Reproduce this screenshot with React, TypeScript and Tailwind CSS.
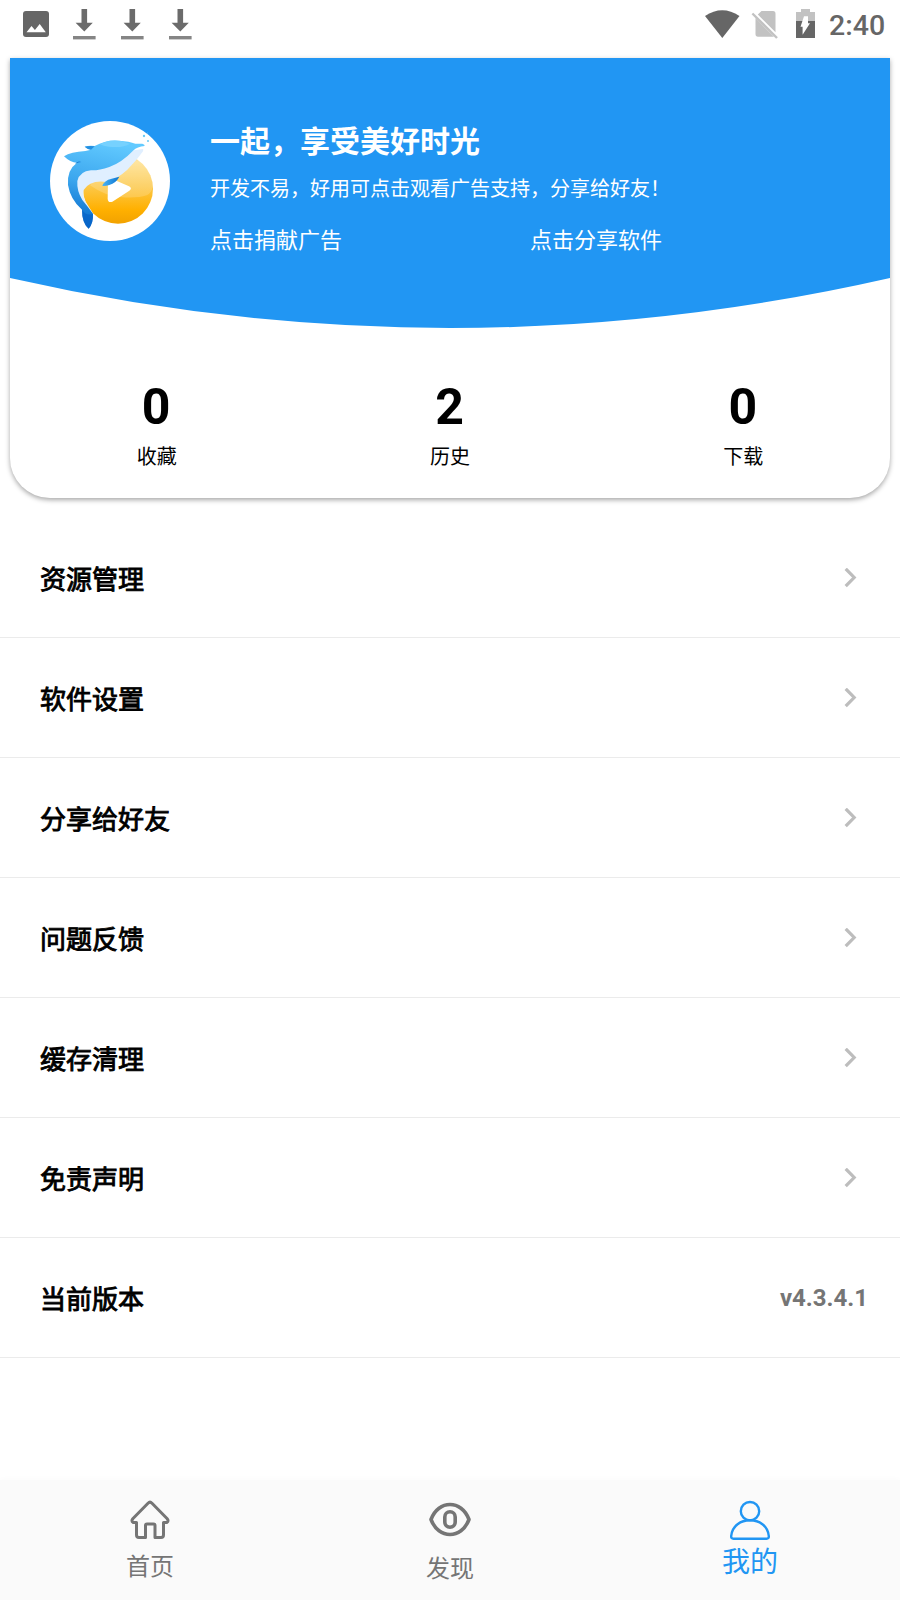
import type { ReactNode } from "react";

const stats = [
  { label: "收藏", value: 0 },
  { label: "历史", value: 2 },
  { label: "下载", value: 0 },
];

const menu = ["资源管理", "软件设置", "分享给好友", "问题反馈", "缓存清理", "免责声明"];

function DownloadIcon() {
  return (
    <svg className="w-6 h-8" viewBox="0 0 24 32">
      <path d="M9.5 1h5.6v13.7h5.7L12.3 23.5 3.6 14.7h5.9z" fill="#6b6b6b" />
      <rect x="1" y="28" width="22.6" height="3.4" fill="#858585" />
    </svg>
  );
}

function StatusBar() {
  return (
    <div className="h-[58px] flex items-start justify-between text-[#666]">
      <div className="flex pl-[23px] pt-2">
        <svg className="w-[26px] h-8 mr-[23px]" viewBox="0 0 26 32">
          <rect y="3" width="26" height="26" rx="3" fill="#666" />
          <path d="M3.5 24.3 8.5 18l3.4 4.1 4.8-6.2 6.1 8.4z" fill="#fff" />
        </svg>
        <div className="flex gap-6">
          <DownloadIcon />
          <DownloadIcon />
          <DownloadIcon />
        </div>
      </div>

      <div className="flex pr-[16px] pt-2">
        <svg className="w-[118px] h-[32px]" viewBox="0 0 118 32">
          <path d="M0 8Q17.2-3.6 34.5 8L17.3 30z" fill="#666" />
          <path d="M56.5 3H68Q70.5 3 70.5 5.7V24.2L52.8 6.6zM50.5 10.1 69 28.8H53Q50.5 28.8 50.5 26z" fill="#c2c2c2" />
          <path d="M47.4 5.5 72 30" stroke="#c2c2c2" strokeWidth="2.4" />
          <path d="M91 4h5V1h9v3h5v9H91z" fill="#c2c2c2" />
          <path d="M91 13h19v17H91z" fill="#666" />
          <path d="M103 8.2V15.2H105L97.6 26.8V18.8H95.5L99 8.2z" fill="#fff" />
        </svg>
        <span className="ml-[6px] text-[28.5px] leading-[35px] font-medium w-[55px] whitespace-nowrap">2:40</span>
      </div>
    </div>
  );
}

function Logo() {
  return (
    <svg className="w-[120px] h-[120px] shrink-0" viewBox="30 33 360 360">
      <defs>
        <linearGradient id="ball" x1="0" y1="0" x2="0" y2="1">
          <stop offset="0" stopColor="#ffe7a0" />
          <stop offset=".45" stopColor="#fcc94c" />
          <stop offset=".8" stopColor="#ffb000" />
          <stop offset="1" stopColor="#f2a200" />
        </linearGradient>
        <linearGradient id="body" x1=".5" y1="0" x2=".3" y2="1">
          <stop offset="0" stopColor="#62caff" />
          <stop offset=".5" stopColor="#3ba6ee" />
          <stop offset="1" stopColor="#0366c8" />
        </linearGradient>
        <linearGradient id="fin" x1="0" y1="0" x2="1" y2="0">
          <stop offset="0" stopColor="#49b4f5" />
          <stop offset="1" stopColor="#0b74d1" />
        </linearGradient>
      </defs>
      <circle cx="210" cy="213" r="180" fill="#fff" />
      <circle cx="234" cy="236" r="105" fill="url(#ball)" />
      <path d="M296 151Q334 178 339 225 337 248 320 256 290 266 240 261 195 258 150 226L200 160z" fill="#fff" opacity=".18" />
      <path d="M131 240Q127 257 136 274L157 307 140 300 110 260 100 215 116 160 220 130 303 118Q313 114 309 124 290 152 262 179 231 207 202 216 150 208 131 240z" fill="#e0efff" />
      <path d="M72 139Q92 126 136 123L153 119Q143 119 134 110 146 106 164 108 199 88 238 92 268 94 286 101L307 101Q315 104 314 108 292 110 279 122 247 156 208 171 176 182 153 181 119 184 112 213 110 243 127 270 144 291 159 311 160 340 146 356 126 339 126 299 91 269 84 225 80 180 111 158 91 158 72 139z" fill="url(#body)" />
      <path d="M180 103Q206 87 243 93L270 101Q247 115 207 110 190 109 180 103z" fill="#76d1fe" />
      <path d="M134 110Q148 106 164 109L153 119Q143 118 134 110z" fill="#238fe1" />
      <path d="M105 162Q112 151 124 156 114 156 105 162z" fill="#0b74d1" />
      <path d="M204 211 212 207Q220 207 229 212L267 229Q278 235 268 242L217 275Q204 280 203 266z" fill="#fff" />
      <path d="M187 228Q192 211 215 206L238 200Q228 219 208 225 196 229 187 228z" fill="url(#fin)" />
      <path d="M126 299Q139 320 159 311 161 338 146 356 126 340 126 299z" fill="#0763c8" opacity=".7" />
      <circle cx="312" cy="78" r="3.5" fill="#67c9f4" />
      <circle cx="324" cy="93" r="3" fill="#67c9f4" />
      <circle cx="322" cy="69" r="1.3" fill="#9adcf7" />
    </svg>
  );
}

function ProfileCard() {
  return (
    <div className="mx-2.5 h-[440px] rounded-b-[40px] bg-white shadow-[0_2px_5px_rgba(0,0,0,0.35)]">
      <div className="h-[270px] grid">
        <svg className="col-start-1 row-start-1 w-full h-[270px]" viewBox="0 0 880 270">
          <path d="M0 0H880V220Q440 320 0 220z" fill="#2196f3" />
        </svg>
        <div className="col-start-1 row-start-1 z-10 flex px-10 text-white">
          <div className="pt-[63px]">
            <Logo />
          </div>
          <div className="ml-10 flex-1 pt-[62px]">
            <h1 className="text-[30px] leading-[44px] font-bold">一起，享受美好时光</h1>
            <p className="mt-[10px] text-[20px] leading-[30px] whitespace-nowrap">开发不易，好用可点击观看广告支持，分享给好友！</p>
            <div className="mt-[21px] flex text-[22px] leading-[32px]">
              <span className="w-1/2">点击捐献广告</span>
              <span className="w-1/2">点击分享软件</span>
            </div>
          </div>
        </div>
      </div>

      <div className="flex pt-[49px] text-center text-black">
        {stats.map((s) => (
          <div key={s.label} className="flex-1">
            <div className="text-[50px] leading-[60px] font-bold -ml-px">{s.value}</div>
            <div className="mt-[5px] text-[20px] leading-[30px]">{s.label}</div>
          </div>
        ))}
      </div>
    </div>
  );
}

function Row({ title, children }: { title: string; children: ReactNode }) {
  return (
    <div className="h-[120px] flex items-center justify-between pl-10 border-b border-[#ebebeb]">
      <span className="pt-1 text-[26px] leading-[38px] text-black [-webkit-text-stroke:0.9px_black]">{title}</span>
      {children}
    </div>
  );
}

function Tab({ children }: { children: ReactNode }) {
  return <div className="flex-1 flex flex-col items-center pt-[18px] text-[24px] leading-[36px]">{children}</div>;
}

function TabIcon({ children }: { children: ReactNode }) {
  return (
    <svg className="w-[44px] h-[44px] shrink-0" viewBox="0 0 44 44" fill="none" stroke="currentColor" strokeLinejoin="round" strokeLinecap="round">
      {children}
    </svg>
  );
}

export default function App() {
  return (
    <div className="w-[900px] h-[1600px] flex flex-col overflow-hidden bg-white font-[Roboto,'Noto_Sans_CJK_SC',sans-serif]">
      <StatusBar />
      <ProfileCard />

      <div className="mt-5 flex-1">
        {menu.map((title) => (
          <Row key={title} title={title}>
            <svg className="w-[14px] h-[20px] mr-[42px]" viewBox="0 0 14 20">
              <path d="M1.7 .8 10.2 9.5 1.7 18.2" fill="none" stroke="#bdbdbd" strokeWidth="3.2" />
            </svg>
          </Row>
        ))}
        <Row title="当前版本">
          <span className="mr-8 text-[24px] font-bold text-[#757575]">v4.3.4.1</span>
        </Row>
      </div>

      <div className="h-[120px] shrink-0 flex bg-[#fafafa] text-[#757575] shadow-[0_-1px_6px_rgba(0,0,0,0.02)]">
        <Tab>
          <TabIcon>
            <path strokeWidth="3" d="M8.5 24.5H5.2Q2.8 23 5 20.5L20 5.2Q22 3.2 24 5.2L39 20.5Q41.2 23 38.8 24.5H35.5V37Q35.5 39.5 33 39.5H27V27.5Q27 26 25.5 26H19Q17.5 26 17.5 27.5V39.5H11Q8.5 39.5 8.5 37z" />
          </TabIcon>
          <span className="mt-[7px]">首页</span>
        </Tab>
        <Tab>
          <TabIcon>
            <path strokeWidth="3.6" d="M3 21.5C10.5 1.5 33.5 1.5 41 21.5 33.5 41.5 10.5 41.5 3 21.5z" />
            <rect x="16.8" y="13.8" width="10.4" height="15.4" rx="5.2" strokeWidth="3.6" />
          </TabIcon>
          <span className="mt-[9px]">发现</span>
        </Tab>
        <Tab>
          <div className="flex flex-col items-center text-[28px] leading-[40px] text-[#2196f3]">
            <TabIcon>
              <circle cx="22" cy="13.2" r="9.2" strokeWidth="2.4" />
              <path strokeWidth="2.4" d="M3.2 38C5 17 39 17 40.8 38Q41 40.8 38.5 40.8H5.5Q3 40.8 3.2 38z" />
            </TabIcon>
            <span className="mt-px">我的</span>
          </div>
        </Tab>
      </div>
    </div>
  );
}
